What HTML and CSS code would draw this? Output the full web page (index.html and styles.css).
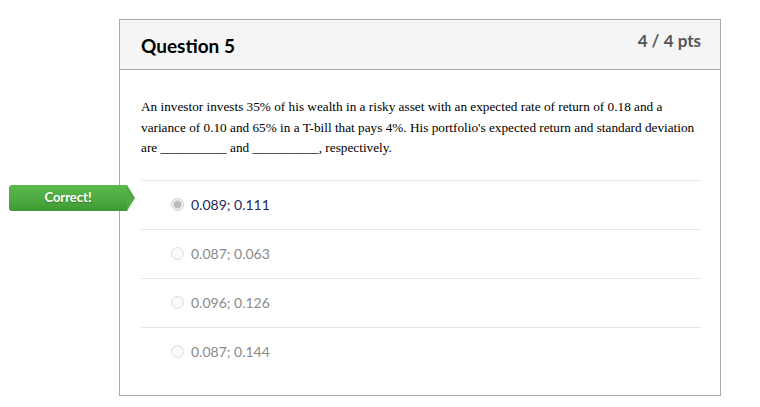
FILE: index.html
```html
<!DOCTYPE html>
<html>
<head>
<meta charset="utf-8">
<link rel="stylesheet" href="styles.css">
</head>
<body>
<div class="page">
  <div class="card">
    <div class="header">
      <h2 class="title">Question 5</h2>
      <div class="pts">4 / 4 pts</div>
    </div>
    <div class="content">
      <p class="question">An investor invests 35% of his wealth in a risky asset with an expected rate of return of 0.18 and a variance of 0.10 and 65% in a T-bill that pays 4%. His portfolio's expected return and standard deviation are __________ and __________, respectively.</p>
      <div class="answers">
        <div class="answer correct">
          <div class="badge">Correct!</div>
          <span class="radio checked"></span>
          <span class="label">0.089; 0.111</span>
        </div>
        <div class="answer">
          <span class="radio"></span>
          <span class="label">0.087; 0.063</span>
        </div>
        <div class="answer">
          <span class="radio"></span>
          <span class="label">0.096; 0.126</span>
        </div>
        <div class="answer">
          <span class="radio"></span>
          <span class="label">0.087; 0.144</span>
        </div>
      </div>
    </div>
  </div>
</div>
</body>
</html>
```

FILE: styles.css
```css
html, body {
  margin: 0;
  padding: 0;
  background: #ffffff;
  font-family: Lato, "Open Sans", sans-serif;
}

.page {
  padding: 19px 0 0 119px;
}

.card {
  width: 600px;
  height: 375px;
  border: 1px solid #aaaaaa;
  box-sizing: content-box;
}

.header {
  height: 49px;
  background: #f5f5f5;
  border-bottom: 1px solid #aaaaaa;
  display: flex;
  justify-content: space-between;
  padding: 0 19px 0 21px;
}

.title {
  margin: 0;
  padding-top: 13px;
  font-size: 19px;
  font-weight: 700;
  color: #000000;
  line-height: 25px;
}

.pts {
  padding-top: 10px;
  font-size: 17px;
  font-weight: 700;
  color: #555555;
  line-height: 22px;
}

.content {
  padding: 0 19px 0 21px;
}

.question {
  margin: 0 -8px 0 0;
  padding: 27px 0 21px 0;
  font-family: "Liberation Serif", "Times New Roman", serif;
  font-size: 13.25px;
  line-height: 20.5px;
  color: #000000;
}

.answers {
  display: flex;
  flex-direction: column;
}

.answer {
  position: relative;
  height: 48px;
  border-top: 1px solid #e6e6e6;
  display: flex;
  align-items: center;
  padding-left: 30px;
  font-size: 14px;
  color: #8a8a8a;
}

.answer.correct {
  color: #1f2b58;
}

.radio {
  width: 11px;
  height: 11px;
  border-radius: 50%;
  border: 1px solid #dddddd;
  background: #fafafa;
  margin-right: 7px;
  box-sizing: content-box;
}

.radio.checked {
  border-color: #cfcfcf;
  background: radial-gradient(circle, #bdbdbd 0, #bdbdbd 3.5px, #f2f2f2 4.5px);
}

.badge {
  position: absolute;
  left: -132px;
  top: 4px;
  width: 118px;
  height: 26px;
  line-height: 25px;
  text-align: center;
  color: #ffffff;
  font-weight: 700;
  font-size: 13px;
  text-shadow: 0 1px 1px rgba(0,0,0,0.25);
  background: linear-gradient(#5dba4e, #3f9a34);
  border-radius: 3px 0 0 3px;
}

.badge::after {
  content: "";
  position: absolute;
  right: -8px;
  top: 0;
  width: 0;
  height: 0;
  border-top: 13px solid transparent;
  border-bottom: 13px solid transparent;
  border-left: 8px solid #4eaa42;
}
```
